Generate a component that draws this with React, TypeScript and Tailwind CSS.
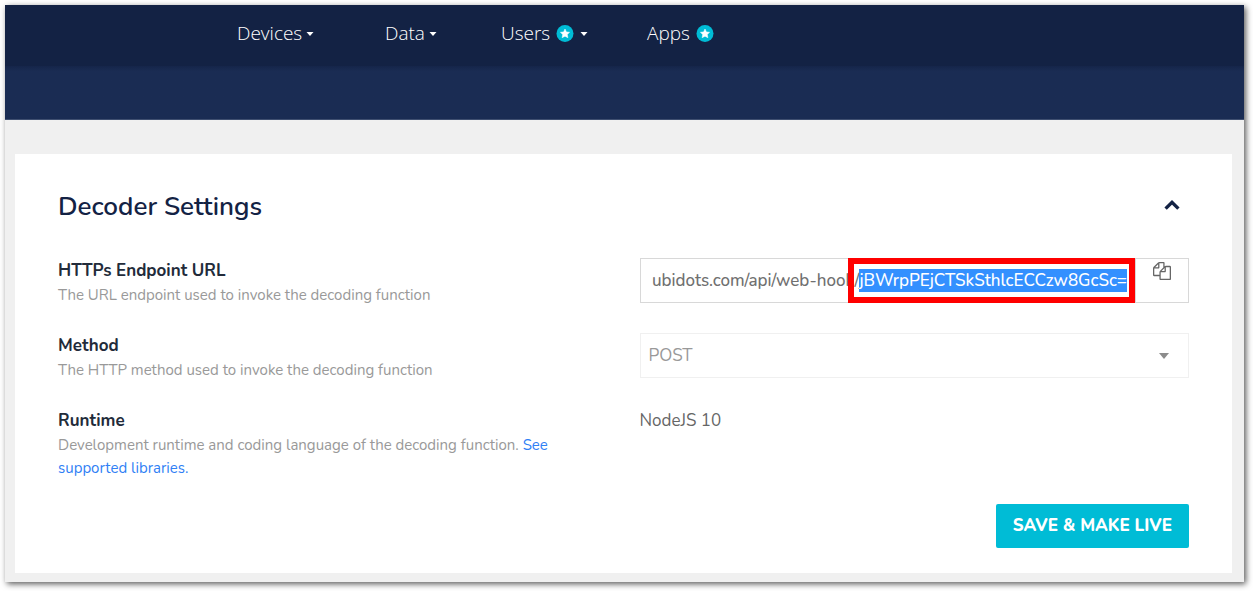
import { useEffect, useRef } from "react";
import type { ReactNode } from "react";

const ENDPOINT_PREFIX = "ubidots.com/api/web-hook/";
const ENDPOINT_TOKEN = "jBWrpPEjCTSkSthlcECCzw8GcSc=";

function Caret() {
  return (
    <svg viewBox="0 0 8 6" className="h-[6px] w-2" fill="currentColor" aria-hidden="true">
      <path d="M0.5 2h7L4 6z" />
    </svg>
  );
}

function StarBadge() {
  return (
    <svg viewBox="0 0 18 18" className="h-[18px] w-[18px]" aria-hidden="true">
      <circle cx="9" cy="9.5" r="8.5" fill="#00bcd6" />
      <path
        d="M9 5l1.4 2.9 3.2.4-2.3 2.2.6 3.2L9 12.2l-2.9 1.5.6-3.2-2.3-2.2 3.2-.4z"
        fill="#fff"
        stroke="#fff"
        strokeWidth="0.5"
      />
    </svg>
  );
}

function CopyIcon() {
  return (
    <svg viewBox="0 0 1792 1792" className="h-[18px] w-[18px]" fill="currentColor" aria-hidden="true">
      <path d="M1696 384q40 0 68 28t28 68v1216q0 40-28 68t-68 28h-960q-40 0-68-28t-28-68v-288h-544q-40 0-68-28t-28-68v-672q0-40 20-88t48-76l408-408q28-28 76-48t88-20h416q40 0 68 28t28 68v328q68-40 128-40h416zm-544 213l-299 299h299v-299zm-640-384l-299 299h299v-299zm196 647l316-316v-416h-384v416q0 40-28 68t-68 28h-416v640h512v-256q0-40 20-88t48-76zm956 804v-1152h-384v416q0 40-28 68t-68 28h-416v640h896z" />
    </svg>
  );
}

function Field({
  label,
  htmlFor,
  description,
  children,
}: {
  label: string;
  htmlFor?: string;
  description: ReactNode;
  children: ReactNode;
}) {
  return (
    <div className="grid grid-cols-2 gap-8">
      <div>
        {htmlFor ? (
          <label htmlFor={htmlFor} className="block text-[17px] leading-[26px] font-bold text-[#222b3a]">
            {label}
          </label>
        ) : (
          <h3 className="text-[17px] leading-[26px] font-bold text-[#222b3a]">{label}</h3>
        )}
        <p className="text-[15px] leading-[23px] text-[#999]">{description}</p>
      </div>
      <div>{children}</div>
    </div>
  );
}

function EndpointInput() {
  const ref = useRef<HTMLInputElement>(null);

  useEffect(() => {
    const input = ref.current;
    if (!input) return;
    input.focus();
    input.setSelectionRange(ENDPOINT_PREFIX.length, input.value.length);
    input.scrollLeft = input.scrollWidth;
  }, []);

  return (
    <div className="relative flex h-[45px] border border-[#d8d8d8]">
      <div className="min-w-0 flex-1 px-2">
        <input
          id="endpoint"
          ref={ref}
          readOnly
          value={ENDPOINT_PREFIX + ENDPOINT_TOKEN}
          className="h-full w-full text-right text-[17px] font-medium text-[#707070] outline-none selection:bg-[#3390ff] selection:text-white"
        />
      </div>
      <button
        type="button"
        aria-label="Copy"
        className="flex w-[53px] items-start justify-center border-l border-[#d8d8d8] pt-[3px] text-[#666]"
      >
        <CopyIcon />
      </button>
      <div className="pointer-events-none absolute -top-px right-[53px] -bottom-px w-[287px] border-6 border-[#ff0000]" />
    </div>
  );
}

export default function App() {
  return (
    <div className="bg-white pt-[5px] pr-[9px] pb-[9px] pl-[5px] font-['Nunito','Open_Sans',sans-serif]">
      <div className="bg-[#f0f0f0] shadow-[2px_2px_6px_0px_rgba(0,0,0,0.65)]">
        <header>
          <nav className="flex h-[61px] items-start bg-[#132244] pt-[14px] pl-[232px] font-['Open_Sans',sans-serif] text-[19px] leading-7 font-light text-white">
            <a href="#devices" className="flex w-[148px] items-center gap-1">
              Devices <Caret />
            </a>
            <a href="#data" className="flex w-[116px] items-center gap-1">
              Data <Caret />
            </a>
            <a href="#users" className="flex w-[146px] items-center gap-[6px]">
              Users <StarBadge />
              <Caret />
            </a>
            <a href="#apps" className="flex items-center gap-[6px]">
              Apps <StarBadge />
            </a>
          </nav>
          <div className="h-[54px] border-b border-[#3f4f70] bg-[#1a2c53] bg-linear-to-b from-[#15254a] to-[#1a2c53] to-10%" />
        </header>
        <main className="pt-[34px] pr-3 pb-[9px] pl-[10px]">
          <section className="bg-white px-[43px] pt-[34px] pb-[25px]">
            <div className="flex items-start justify-between">
              <h2 className="text-[26px] leading-[38px] font-semibold text-[#132244]">Decoder Settings</h2>
              <button type="button" aria-label="Collapse" className="mt-3 mr-[9px] text-[#132244]">
                <svg viewBox="0 0 16 10" className="h-[10px] w-4" fill="none" stroke="currentColor" strokeWidth="3.4" aria-hidden="true">
                  <path d="M1.6 8.6L8 2.4l6.4 6.2" />
                </svg>
              </button>
            </div>
            <div className="mt-8 flex flex-col gap-[26px]">
              <Field
                label="HTTPs Endpoint URL"
                htmlFor="endpoint"
                description="The URL endpoint used to invoke the decoding function"
              >
                <EndpointInput />
              </Field>
              <Field
                label="Method"
                htmlFor="method"
                description="The HTTP method used to invoke the decoding function"
              >
                <div className="relative">
                  <select
                    id="method"
                    className="h-[45px] w-full appearance-none border border-[#f0f0f0] px-2 text-[17px] text-[#999]"
                  >
                    <option>POST</option>
                  </select>
                  <svg viewBox="0 0 10 6" className="pointer-events-none absolute top-5 right-5 h-[6px] w-[10px]" fill="#8c8c8c" aria-hidden="true">
                    <path d="M0 0h10L5 6z" />
                  </svg>
                </div>
              </Field>
              <Field
                label="Runtime"
                description={
                  <>
                    Development runtime and coding language of the decoding function.{" "}
                    <a href="#libraries" className="text-[#2f80f5]">See supported libraries.</a>
                  </>
                }
              >
                <p className="text-[17px] leading-[26px] text-[#666]">NodeJS 10</p>
              </Field>
            </div>
            <div className="mt-6 flex justify-end">
              <button type="button" className="h-11 rounded-[2px] bg-[#00bcd6] px-[17px] text-[17px] font-extrabold text-white">
                SAVE &amp; MAKE LIVE
              </button>
            </div>
          </section>
        </main>
      </div>
    </div>
  );
}
